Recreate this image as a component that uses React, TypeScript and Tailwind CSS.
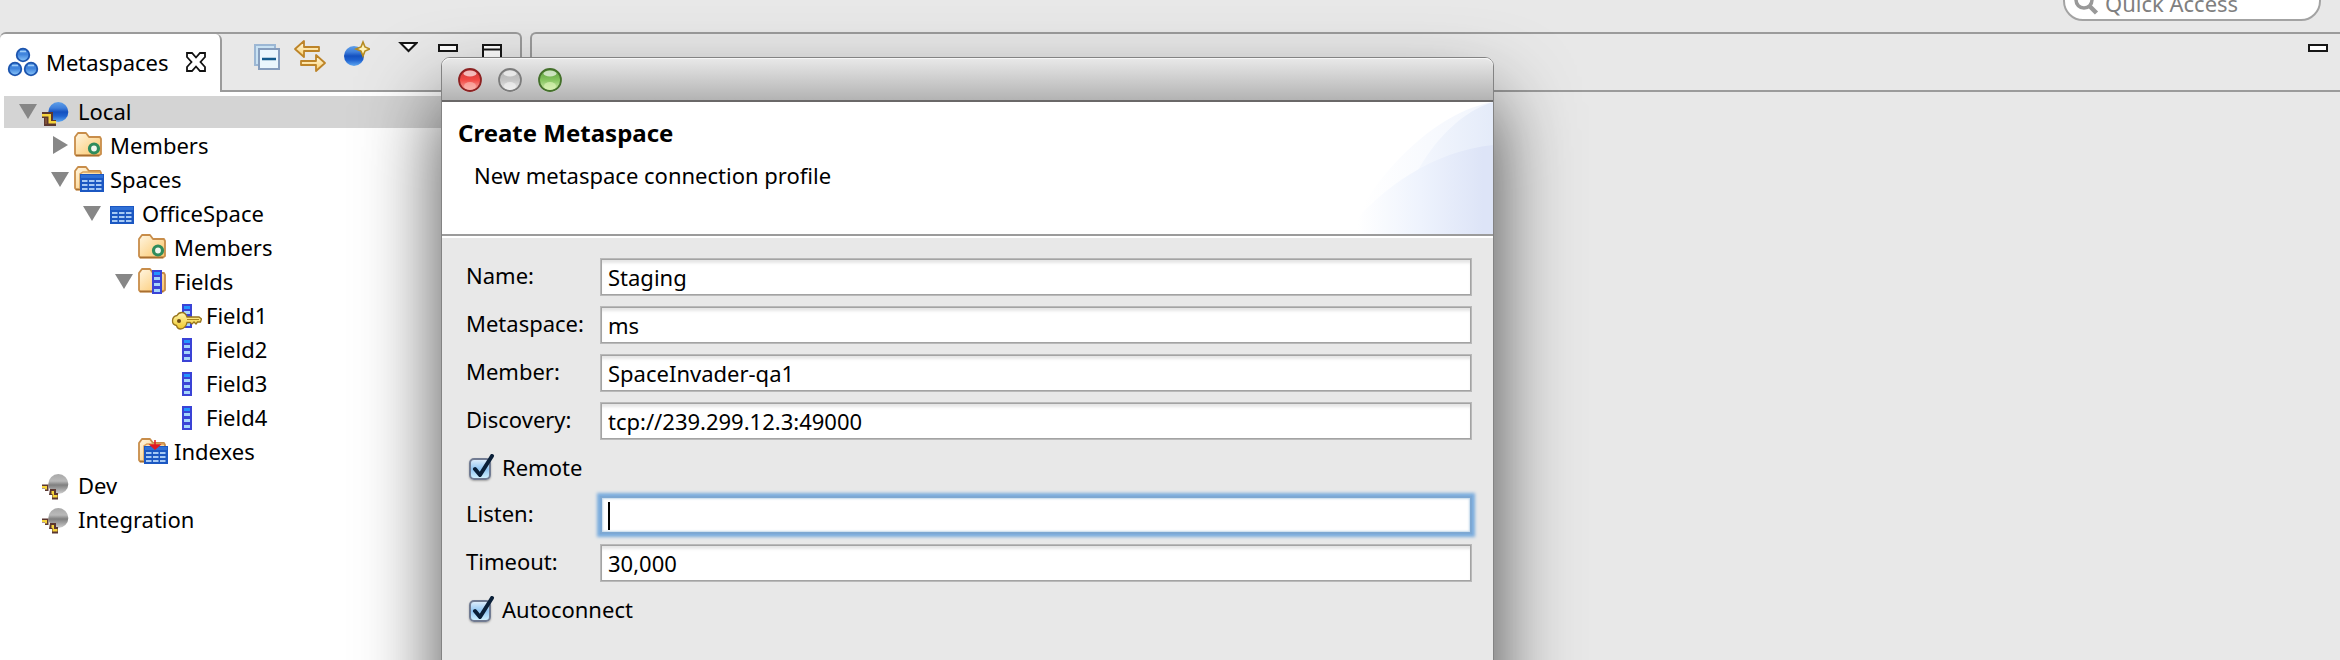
import { useState, type ReactNode } from "react";

type IconName = "globe" | "globeOff" | "members" | "spaces" | "table" | "fields" | "keyField" | "field" | "indexes";

interface TreeRow {
  label: string;
  level: 0 | 1 | 2 | 3 | 4;
  icon: IconName;
  state?: "open" | "closed";
  selected?: boolean;
}

const rows: TreeRow[] = [
  { label: "Local", level: 0, icon: "globe", state: "open", selected: true },
  { label: "Members", level: 1, icon: "members", state: "closed" },
  { label: "Spaces", level: 1, icon: "spaces", state: "open" },
  { label: "OfficeSpace", level: 2, icon: "table", state: "open" },
  { label: "Members", level: 3, icon: "members" },
  { label: "Fields", level: 3, icon: "fields", state: "open" },
  { label: "Field1", level: 4, icon: "keyField" },
  { label: "Field2", level: 4, icon: "field" },
  { label: "Field3", level: 4, icon: "field" },
  { label: "Field4", level: 4, icon: "field" },
  { label: "Indexes", level: 3, icon: "indexes" },
  { label: "Dev", level: 0, icon: "globeOff" },
  { label: "Integration", level: 0, icon: "globeOff" },
];

const indent = ["pl-[15px]", "pl-[47px]", "pl-[79px]", "pl-[111px]", "pl-[143px]"];

function Gradients() {
  return (
    <svg className="absolute size-0" aria-hidden="true">
      <defs>
        <linearGradient id="gGlobe" x1="0" y1="0" x2="0" y2="1">
          <stop offset="0" stopColor="#5f9fe8" />
          <stop offset="0.3" stopColor="#3f7fdb" />
          <stop offset="0.5" stopColor="#1450bf" />
          <stop offset="0.7" stopColor="#1f62cf" />
          <stop offset="1" stopColor="#5fa8f2" />
        </linearGradient>
        <linearGradient id="gGlobeOff" x1="0" y1="0" x2="0" y2="1">
          <stop offset="0" stopColor="#a9a9a9" />
          <stop offset="0.35" stopColor="#b9b9b9" />
          <stop offset="0.55" stopColor="#7f7f7f" />
          <stop offset="0.75" stopColor="#a2a2a2" />
          <stop offset="1" stopColor="#d0d0d0" />
        </linearGradient>
        <linearGradient id="gFolder" x1="0" y1="0" x2="1" y2="1">
          <stop offset="0" stopColor="#fff6e2" />
          <stop offset="1" stopColor="#fbc566" />
        </linearGradient>
        <linearGradient id="gNode" x1="0" y1="0" x2="0" y2="1">
          <stop offset="0" stopColor="#4c8fe2" />
          <stop offset="0.45" stopColor="#3f83dc" />
          <stop offset="1" stopColor="#8cc8fb" />
        </linearGradient>
        <linearGradient id="gKey" x1="0" y1="0" x2="0" y2="1">
          <stop offset="0" stopColor="#fff6b0" />
          <stop offset="1" stopColor="#f0c828" />
        </linearGradient>
        <linearGradient id="gArrow" x1="0" y1="0" x2="0" y2="1">
          <stop offset="0" stopColor="#fffbe8" />
          <stop offset="1" stopColor="#fbcf6a" />
        </linearGradient>
      </defs>
    </svg>
  );
}

function Folder({ shade = false }: { shade?: boolean }) {
  return (
    <g>
      <path d="M1 24V7l3-4h8l3 4h11l1 2v15l-2 1.500H2z" fill="url(#gFolder)" stroke="#c88d4a" strokeWidth="1.800" strokeLinejoin="round" />
      <path d="M2 25.500h23" stroke="#a86f30" strokeWidth="1.500" />
      {shade && <path d="M6 24V10l3-2h17" fill="none" stroke="#d9a25c" strokeWidth="1.500" />}
    </g>
  );
}

function Grid({ x, y }: { x: number; y: number }) {
  return (
    <g transform={`translate(${x} ${y})`}>
      <rect width="24" height="18" fill="#1b57c2" />
      <rect x="1" y="1" width="22" height="3" fill="#2f70d6" />
      {[6, 10, 14].map((cy) =>
        [2, 9, 16].map((cx) => <rect key={`${cx}-${cy}`} x={cx} y={cy} width="5.500" height="2" fill="#a6c9f4" />),
      )}
    </g>
  );
}

function Column({ x }: { x: number }) {
  return (
    <g transform={`translate(${x} 4)`}>
      <rect width="10" height="24" fill="#3a43d6" />
      <rect x="2" y="2" width="6" height="3" fill="#2394ff" />
      {[7, 13, 19].map((cy) => (
        <rect key={cy} x="2" y={cy} width="6" height="3" fill="#a5d5fb" />
      ))}
    </g>
  );
}

function TreeIcon({ name }: { name: IconName }) {
  const art: Record<IconName, ReactNode> = {
    globe: (
      <g>
        <circle cx="16.300" cy="16" r="10" fill="url(#gGlobe)" />
        <path d="M0 16h11v8h3v6H2v-8H0z" fill="#5b3730" />
        <path d="M0 18h9v7h5v2.500H6.500V20.500H0z" fill="#f6d43c" />
        <path d="M4 22v6" stroke="#8a5a3a" strokeWidth="1.500" />
      </g>
    ),
    globeOff: (
      <g>
        <circle cx="16.300" cy="14" r="10" fill="url(#gGlobeOff)" />
        <path d="M0 14.500h6.500V21H3v-2.500H0z" fill="#5b3730" />
        <path d="M0 16h5v3.500H3V18H0z" fill="#f6d43c" />
        <path d="M8 19h6v4h2v6.500H10V25H7z" fill="#5b3730" />
        <path d="M9.500 21h2.500v4h3.500v2.500H10.500V24h-1z" fill="#f6d43c" />
      </g>
    ),
    members: (
      <g>
        <Folder />
        <circle cx="20" cy="18.500" r="4.500" fill="#f2f8ee" stroke="#2f8c5c" strokeWidth="3.200" />
      </g>
    ),
    spaces: (
      <g>
        <Folder shade />
        <Grid x={6} y={10} />
      </g>
    ),
    table: <Grid x={4} y={8} />,
    fields: (
      <g>
        <Folder />
        <Column x={14} />
      </g>
    ),
    field: <Column x={12} />,
    keyField: (
      <g>
        <Column x={12} />
        <path
          d="M2.500 21c0-3 2-5 4.500-5.500 1-2 3-3 5-3s4 1.500 5 4.500h12l2.500 2-1 3h-3l-1.500 2-2-2-2 2-2-1.500h-3c-.5 3-3 6.500-6.500 6.500-2 0-3.500-1.500-4-3.500-2.500-.5-4-2-4-4.500z"
          fill="url(#gKey)"
          stroke="#97741c"
          strokeWidth="1.300"
        />
        <circle cx="9" cy="21" r="2" fill="#6e4a12" />
        <path d="M17 19.500h12" stroke="#a8841f" strokeWidth="1" />
      </g>
    ),
    indexes: (
      <g>
        <Folder shade />
        <Grid x={6} y={10} />
        <path d="M17 4v8M12.500 9l4.500 4 4.500-4z" fill="#e01a22" stroke="#e01a22" strokeWidth="1.500" />
      </g>
    ),
  };
  return (
    <svg className="size-8 shrink-0" viewBox="0 0 32 32" aria-hidden="true">
      {art[name]}
    </svg>
  );
}

function Twisty({ row }: { row: TreeRow }) {
  if (!row.state) return <span className="w-[18px] shrink-0" />;
  return (
    <button type="button" aria-label={`Toggle ${row.label}`} className="h-8 w-[18px] shrink-0">
      <svg viewBox="0 0 18 32" className="h-8 w-[18px]">
        <path d={row.state === "open" ? "M0 8h18L9 23z" : "M2 6v18l15-9z"} fill="#878787" />
      </svg>
    </button>
  );
}

function ToolButton({ label, width, children }: { label: string; width: "w-8" | "w-7" | "w-5"; children: ReactNode }) {
  const box = { "w-8": "0 0 32 32", "w-7": "0 0 28 32", "w-5": "0 0 20 32" }[width];
  return (
    <button type="button" aria-label={label} className={`h-8 shrink-0 ${width}`}>
      <svg viewBox={box} className={`h-8 ${width}`}>
        {children}
      </svg>
    </button>
  );
}

function MinimizeArt() {
  return <rect x="1" y="5" width="18" height="6" fill="#fff" stroke="#161616" strokeWidth="2" />;
}

function MetaspacesView() {
  return (
    <section className="flex w-[522px] shrink-0 flex-col">
      <div className="flex h-[60px] rounded-t-md border-t-2 border-r-2 border-[#9b9b9b]">
        <div className="flex w-[222px] shrink-0 items-center rounded-t-md border-r-2 border-[#9b9b9b] bg-white pb-0.5 pl-[7px]">
          <svg className="size-8 shrink-0" viewBox="0 0 32 32" aria-hidden="true">
            {[
              [16, 9],
              [8, 23],
              [24, 23],
            ].map(([x, y]) => (
              <g key={x}>
                <circle cx={x} cy={y} r="6.300" fill="url(#gNode)" stroke="#1d55ae" strokeWidth="1.800" />
                <path d={`M${x - 3} ${y - 3.5}h6`} stroke="#9dccf8" strokeWidth="1.500" />
              </g>
            ))}
          </svg>
          <h2 className="ml-[7px]">Metaspaces</h2>
          <button type="button" aria-label="Close Metaspaces" className="ml-[17px] size-5 shrink-0">
            <svg viewBox="0 0 20 20" className="size-5">
              <path d="M1 1h5l4 4.500L14 1h5v4l-4.500 5 4.500 5v4h-5l-4-4.500L6 19H1v-4l4.500-5L1 5z" fill="#fff" stroke="#111" strokeWidth="1.800" />
            </svg>
          </button>
        </div>
        <div role="toolbar" aria-label="View actions" className="flex flex-1 border-b-2 border-[#9b9b9b] pt-1.5 pl-[30px]">
          <ToolButton label="Collapse all" width="w-8">
            <rect x="3" y="5" width="20" height="20" fill="#c9e2f3" stroke="#9cb7d4" strokeWidth="2" />
            <rect x="7" y="9" width="20" height="20" fill="#eaf6fd" stroke="#869dbd" strokeWidth="2" />
            <path d="M10 19h14" stroke="#135a8c" strokeWidth="2.500" />
          </ToolButton>
          <div className="ml-2.5 flex gap-4">
            <ToolButton label="Link with editor" width="w-8">
              <g fill="url(#gArrow)" stroke="#bd8428" strokeWidth="1.800" strokeLinejoin="round">
                <path d="M1 9l9-8v6h15v4H10v6z" />
                <path d="M31 23l-9-8v6H7v4h15v6z" />
              </g>
            </ToolButton>
            <ToolButton label="New metaspace" width="w-7">
              <circle cx="12" cy="16" r="10" fill="url(#gGlobe)" />
              <path d="M21 2l2 5 5 2-5 2-2 5-2-5-5-2 5-2z" fill="#fff3b8" stroke="#b58a20" strokeWidth="1.600" />
            </ToolButton>
          </div>
          <div className="ml-7 flex gap-5">
            <ToolButton label="View menu" width="w-5">
              <path d="M2.500 3h16l-8 8z" fill="#fff" stroke="#161616" strokeWidth="2" />
            </ToolButton>
            <ToolButton label="Minimize view" width="w-5">
              <MinimizeArt />
            </ToolButton>
            <ToolButton label="Maximize view" width="w-7">
              <rect x="5" y="5" width="18" height="18" fill="#fff" stroke="#161616" strokeWidth="2" />
              <path d="M6 9.500h16" stroke="#161616" strokeWidth="2" />
            </ToolButton>
          </div>
        </div>
      </div>
      <div role="tree" className="flex flex-1 flex-col gap-0.5 bg-white pt-1 pl-1">
        {rows.map((row, i) => (
          <div
            key={i}
            role="treeitem"
            aria-selected={!!row.selected}
            className={`flex h-8 items-center ${indent[row.level]} ${row.selected ? "bg-[#d4d4d4]" : ""}`}
          >
            <Twisty row={row} />
            <span className="ml-[5px] flex items-center gap-1">
              <TreeIcon name={row.icon} />
              <span className="pb-0.5">{row.label}</span>
            </span>
          </div>
        ))}
      </div>
    </section>
  );
}

function EditorArea() {
  return (
    <section className="flex min-w-0 flex-1 flex-col rounded-tl-md border-t-2 border-l-2 border-[#9b9b9b]">
      <div className="flex h-[58px] justify-end border-b-2 border-[#9b9b9b] pt-1.5 pr-3">
        <ToolButton label="Minimize editor area" width="w-5">
          <MinimizeArt />
        </ToolButton>
      </div>
    </section>
  );
}

const fieldLook =
  "h-[38px] w-full border border-[#b9b9b9] bg-white pl-[7px] text-black outline-none shadow-[inset_0_0_0_1px_#a3a3a3,inset_0_4px_3px_rgba(0,0,0,0.1)]";
const focusLook =
  "h-[38px] w-full border-2 border-[#7da8d3] bg-white pl-1.5 text-black outline-none shadow-[0_0_3px_3px_#7badde,inset_0_0_2px_1px_#c3d8ea]";

function TextRow({ id, label, initial, focused = false }: { id: string; label: string; initial: string; focused?: boolean }) {
  const [value, setValue] = useState(initial);
  return (
    <div className="flex items-center">
      <label htmlFor={id} className="w-[134px] shrink-0 pb-1">
        {label}
      </label>
      <div className="relative flex-1">
        <input id={id} type="text" value={value} onChange={(e) => setValue(e.target.value)} className={focused ? focusLook : fieldLook} />
        {focused && value === "" && <span className="pointer-events-none absolute top-1.5 left-2 h-7 w-0.5 bg-black" />}
      </div>
    </div>
  );
}

function CheckRow({ id, label }: { id: string; label: string }) {
  const [on, setOn] = useState(true);
  return (
    <div className="flex h-9 items-center pl-[3px]">
      <span className="relative mt-0.5 flex">
        <input
          id={id}
          type="checkbox"
          checked={on}
          onChange={() => setOn(!on)}
          className="size-[22px] appearance-none rounded-[5px] border-2 border-[#717b92] bg-linear-to-b from-[#dcecfb] via-[#8fc4f2] to-[#d0f0ff] shadow-[0_1px_2px_rgba(0,0,0,0.3)]"
        />
        {on && (
          <svg viewBox="0 0 28 28" className="pointer-events-none absolute -top-1 left-0 size-7" aria-hidden="true">
            <path d="M6 15l5 6L23 2" fill="none" stroke="#0a1f38" strokeWidth="4" strokeLinecap="round" strokeLinejoin="round" />
          </svg>
        )}
      </span>
      <label htmlFor={id} className="ml-[11px] pb-0.5">
        {label}
      </label>
    </div>
  );
}

function Light({ label, id, rim, top, mid, glow }: { label: string; id: string; rim: string; top: string; mid: string; glow: string }) {
  return (
    <button type="button" aria-label={label} className="size-6">
      <svg viewBox="0 0 24 24" className="size-6">
        <defs>
          <linearGradient id={id} x1="0" y1="0" x2="0" y2="1">
            <stop offset="0" stopColor={top} />
            <stop offset="0.5" stopColor={mid} />
            <stop offset="1" stopColor={glow} />
          </linearGradient>
        </defs>
        <circle cx="12" cy="12.500" r="11.500" fill="#f4f4f4" />
        <circle cx="12" cy="12" r="11" fill={`url(#${id})`} stroke={rim} strokeWidth="1.800" />
        <ellipse cx="12" cy="5.500" rx="6.500" ry="3" fill="#fff" opacity="0.65" />
        <ellipse cx="12" cy="18" rx="6" ry="4" fill={glow} opacity="0.7" />
      </svg>
    </button>
  );
}

function BannerArt() {
  return (
    <svg viewBox="0 0 150 132" className="absolute top-0 right-0 h-full w-[150px]" aria-hidden="true">
      <defs>
        <linearGradient id="b1" gradientUnits="userSpaceOnUse" x1="20" y1="0" x2="150" y2="0">
          <stop offset="0" stopColor="#fff" />
          <stop offset="1" stopColor="#f1f5fd" />
        </linearGradient>
        <linearGradient id="b2" gradientUnits="userSpaceOnUse" x1="50" y1="0" x2="150" y2="0">
          <stop offset="0" stopColor="#f9fbff" />
          <stop offset="1" stopColor="#e4ebf9" />
        </linearGradient>
        <linearGradient id="b3" gradientUnits="userSpaceOnUse" x1="15" y1="0" x2="140" y2="0">
          <stop offset="0" stopColor="#fff" />
          <stop offset="0.5" stopColor="#eef3fd" />
          <stop offset="1" stopColor="#dde4f7" />
        </linearGradient>
      </defs>
      <path d="M4 132C32 72 92 10 150 0v132z" fill="url(#b1)" />
      <path d="M52 132C62 72 104 14 150 0v132z" fill="url(#b2)" />
      <path d="M0 132C42 82 90 50 150 43v89z" fill="url(#b3)" />
    </svg>
  );
}

function CreateDialog() {
  return (
    <div
      role="dialog"
      aria-labelledby="dialog-title"
      className="absolute top-[57px] -bottom-40 left-[441px] w-[45%] rounded-t-[9px] border border-[#838383] bg-[#e8e8e8] shadow-[0_44px_80px_rgba(0,0,0,0.7)]"
    >
      <div className="flex h-11 items-center gap-4 rounded-t-lg border-b-2 border-[#6a6868] bg-linear-to-b from-[#e9e9e9] to-[#b3b3b3] pt-0.5 pl-4 shadow-[inset_0_1px_0_#f6f6f6]">
        <Light label="Close" id="lr" rim="#8c2222" top="#c83434" mid="#f24a45" glow="#fbb5ae" />
        <Light label="Minimize" id="lg" rim="#7c7c7c" top="#b4b4b4" mid="#c4c4c4" glow="#efefef" />
        <Light label="Zoom" id="lz" rim="#44702b" top="#5b9a3b" mid="#85c45f" glow="#d8f2b4" />
      </div>
      <header className="relative h-[134px] border-b-2 border-[#9b9b9b] bg-white pt-3.5 pl-4">
        <BannerArt />
        <h1 id="dialog-title" className="relative text-[24px] leading-[34px] font-bold">
          Create Metaspace
        </h1>
        <p className="relative mt-2.5 pl-4">New metaspace connection profile</p>
      </header>
      <form className="flex flex-col gap-2.5 border-t-2 border-white pt-5 pr-[21px] pl-6" onSubmit={(e) => e.preventDefault()}>
        <TextRow id="name" label="Name:" initial="Staging" />
        <TextRow id="metaspace" label="Metaspace:" initial="ms" />
        <TextRow id="member" label="Member:" initial="SpaceInvader-qa1" />
        <TextRow id="discovery" label="Discovery:" initial="tcp://239.299.12.3:49000" />
        <CheckRow id="remote" label="Remote" />
        <TextRow id="listen" label="Listen:" initial="" focused />
        <TextRow id="timeout" label="Timeout:" initial="30,000" />
        <CheckRow id="autoconnect" label="Autoconnect" />
      </form>
    </div>
  );
}

export default function App() {
  return (
    <div className="relative flex h-screen flex-col overflow-hidden bg-[#e8e8e8] font-['Noto_Sans',sans-serif] text-[22px] leading-[30px] text-black">
      <Gradients />
      <div className="flex h-8 shrink-0 items-end justify-end pr-[19px] pb-[11px]">
        <div className="flex h-10 w-[258px] shrink-0 items-center gap-1.5 rounded-full border-2 border-[#a3a3a3] bg-white pt-1 pl-2">
          <svg viewBox="0 0 26 26" className="size-[26px] shrink-0" aria-hidden="true">
            <circle cx="11" cy="10" r="8" fill="none" stroke="#999" strokeWidth="3.500" />
            <path d="M16.500 16l7 7" stroke="#999" strokeWidth="4.500" />
          </svg>
          <input
            type="search"
            aria-label="Quick Access"
            placeholder="Quick Access"
            className="w-full min-w-0 bg-transparent outline-none placeholder:text-[#808080]"
          />
        </div>
      </div>
      <main className="flex min-h-0 flex-1 gap-2">
        <MetaspacesView />
        <EditorArea />
      </main>
      <CreateDialog />
    </div>
  );
}
